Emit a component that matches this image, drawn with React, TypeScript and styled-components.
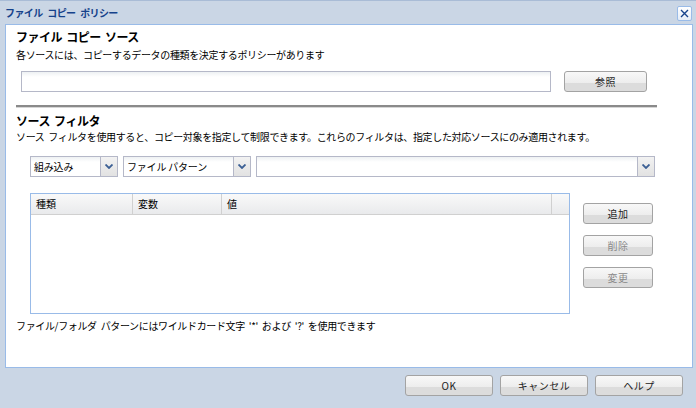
import React from "react";
import styled, { createGlobalStyle } from "styled-components";

const Global = createGlobalStyle`
  html, body {
    margin: 0;
    padding: 0;
    overflow: hidden;
  }
  body {
    font-family: "Noto Sans CJK JP", "DejaVu Sans", sans-serif;
    font-size: 10px;
    color: #000;
  }
`;

const Window = styled.div`
  width: 696px;
  height: 408px;
  background: #cad6e5;
  border-top: 1px solid #a9bcd6;
  box-sizing: border-box;
  display: flex;
  flex-direction: column;
`;

const TitleBar = styled.div`
  height: 23px;
  display: flex;
  align-items: center;
  justify-content: space-between;
  padding: 0 4px 0 5px;
`;

const Title = styled.div`
  color: #15428b;
  font-weight: bold;
  font-size: 10px;
  letter-spacing: -0.6px;
  word-spacing: 3px;
`;

const CloseButton = styled.div`
  width: 13px;
  height: 13px;
  border: 1px solid #99bbe8;
  border-radius: 2px;
  background: linear-gradient(#ffffff, #e4ecf7);
  display: flex;
  align-items: center;
  justify-content: center;
  margin-top: 2px;
`;

const Panel = styled.div`
  margin: 0 3px 0 5px;
  height: 344px;
  background: #fff;
  border: 1px solid #99bbe8;
  box-sizing: border-box;
  padding: 5px 0 0 10px;
  display: flex;
  flex-direction: column;
`;

const Heading = styled.div<{ $top?: number }>`
  font-weight: bold;
  font-size: 12px;
  line-height: 14px;
  margin-top: ${(p) => p.$top ?? 0}px;
  letter-spacing: -0.5px;
  word-spacing: 2px;
`;

const Text = styled.div<{ $top?: number }>`
  font-size: 10px;
  line-height: 14px;
  letter-spacing: -0.35px;
  word-spacing: 2px;
  margin-top: ${(p) => p.$top ?? 0}px;
`;

const Row = styled.div<{ $top: number; $left: number; $gap: number }>`
  display: flex;
  align-items: flex-start;
  margin-top: ${(p) => p.$top}px;
  margin-left: ${(p) => p.$left}px;
  gap: ${(p) => p.$gap}px;
`;

const TextInput = styled.div<{ $width: number }>`
  width: ${(p) => p.$width}px;
  height: 21px;
  box-sizing: border-box;
  border: 1px solid #b5b8c8;
  background: linear-gradient(#eef1f3 0px, #ffffff 5px);
`;

const Button = styled.div<{ $width: number; $disabled?: boolean }>`
  width: ${(p) => p.$width}px;
  height: 21px;
  box-sizing: border-box;
  border: 1px solid #a3a3a3;
  border-radius: 3px;
  background: linear-gradient(
    #f8f8f8 0%,
    #ededed 58%,
    #dcdcdc 60%,
    #dcdcdc 100%
  );
  display: flex;
  align-items: center;
  justify-content: center;
  font-size: 10px;
  letter-spacing: 0.5px;
  color: ${(p) => (p.$disabled ? "#8a8a8a" : "#222")};
`;

const Separator = styled.div`
  margin-top: 13px;
  width: 641px;
  height: 2px;
  background: #8a8a8a;
  border-bottom: 1px solid #d6d6d6;
`;

const Select = styled.div<{ $width: number }>`
  width: ${(p) => p.$width}px;
  height: 21px;
  box-sizing: border-box;
  border: 1px solid #b5b8c8;
  background: linear-gradient(#eef1f3 0px, #ffffff 5px);
  display: flex;
`;

const SelectValue = styled.div`
  flex: 1;
  padding-left: 3px;
  font-size: 10px;
  line-height: 19px;
  letter-spacing: -0.2px;
  white-space: nowrap;
  overflow: hidden;
`;

const SelectArrow = styled.div`
  width: 16px;
  border-left: 1px solid #b5b8c8;
  background: linear-gradient(#f2f2f2, #e2e2e2);
  display: flex;
  align-items: center;
  justify-content: center;
`;

const TableArea = styled.div`
  display: flex;
  margin-top: 16px;
  margin-left: 14px;
  gap: 13px;
`;

const Table = styled.div`
  width: 540px;
  height: 121px;
  box-sizing: border-box;
  border: 1px solid #99bbe8;
  display: flex;
  flex-direction: column;
`;

const HeaderRow = styled.div`
  height: 20px;
  display: flex;
  background: linear-gradient(#f9f9f9, #e9eaec);
  border-bottom: 1px solid #d0d0d0;
`;

const HeaderCell = styled.div<{ $width?: number }>`
  box-sizing: border-box;
  width: ${(p) => (p.$width ? `${p.$width}px` : "auto")};
  flex: ${(p) => (p.$width ? "none" : "1")};
  border-right: 1px solid #d0d0d0;
  padding-left: 5px;
  font-size: 10px;
  line-height: 20px;
  &:last-child {
    border-right: none;
  }
`;

const SideButtons = styled.div`
  display: flex;
  flex-direction: column;
  gap: 11px;
  margin-top: 10px;
`;

const Footer = styled.div`
  display: flex;
  justify-content: flex-end;
  gap: 7px;
  padding: 7px 13px 0 0;
`;

function Chevron() {
  return (
    <svg width="8" height="5" viewBox="0 0 8 5">
      <path d="M0.5 0.5 L4 4 L7.5 0.5" fill="none" stroke="#3b5f94" strokeWidth="1.8" />
    </svg>
  );
}

export default function App() {
  return (
    <Window>
      <Global />
      <TitleBar>
        <Title>ファイル コピー ポリシー</Title>
        <CloseButton>
          <svg width="9" height="9" viewBox="0 0 9 9">
            <path d="M1 1 L8 8 M8 1 L1 8" stroke="#15428b" strokeWidth="1.4" />
          </svg>
        </CloseButton>
      </TitleBar>
      <Panel>
        <Heading>ファイル コピー ソース</Heading>
        <Text $top={4}>各ソースには、コピーするデータの種類を決定するポリシーがあります</Text>
        <Row $top={9} $left={5} $gap={13}>
          <TextInput $width={530} />
          <Button $width={83}>参照</Button>
        </Row>
        <Separator />
        <Heading $top={6}>ソース フィルタ</Heading>
        <Text $top={2}>
          ソース フィルタを使用すると、コピー対象を指定して制限できます。これらのフィルタは、指定した対応ソースにのみ適用されます。
        </Text>
        <Row $top={12} $left={14} $gap={5}>
          <Select $width={88}>
            <SelectValue>組み込み</SelectValue>
            <SelectArrow>
              <Chevron />
            </SelectArrow>
          </Select>
          <Select $width={128}>
            <SelectValue>ファイル パターン</SelectValue>
            <SelectArrow>
              <Chevron />
            </SelectArrow>
          </Select>
          <Select $width={399}>
            <SelectValue />
            <SelectArrow>
              <Chevron />
            </SelectArrow>
          </Select>
        </Row>
        <TableArea>
          <Table>
            <HeaderRow>
              <HeaderCell $width={102}>種類</HeaderCell>
              <HeaderCell $width={89}>変数</HeaderCell>
              <HeaderCell $width={330}>値</HeaderCell>
              <HeaderCell />
            </HeaderRow>
          </Table>
          <SideButtons>
            <Button $width={70}>追加</Button>
            <Button $width={70} $disabled>
              削除
            </Button>
            <Button $width={70} $disabled>
              変更
            </Button>
          </SideButtons>
        </TableArea>
        <Text $top={5}>ファイル/フォルダ パターンにはワイルドカード文字 '*' および '?' を使用できます</Text>
      </Panel>
      <Footer>
        <Button $width={88}>OK</Button>
        <Button $width={88}>キャンセル</Button>
        <Button $width={88}>ヘルプ</Button>
      </Footer>
    </Window>
  );
}
